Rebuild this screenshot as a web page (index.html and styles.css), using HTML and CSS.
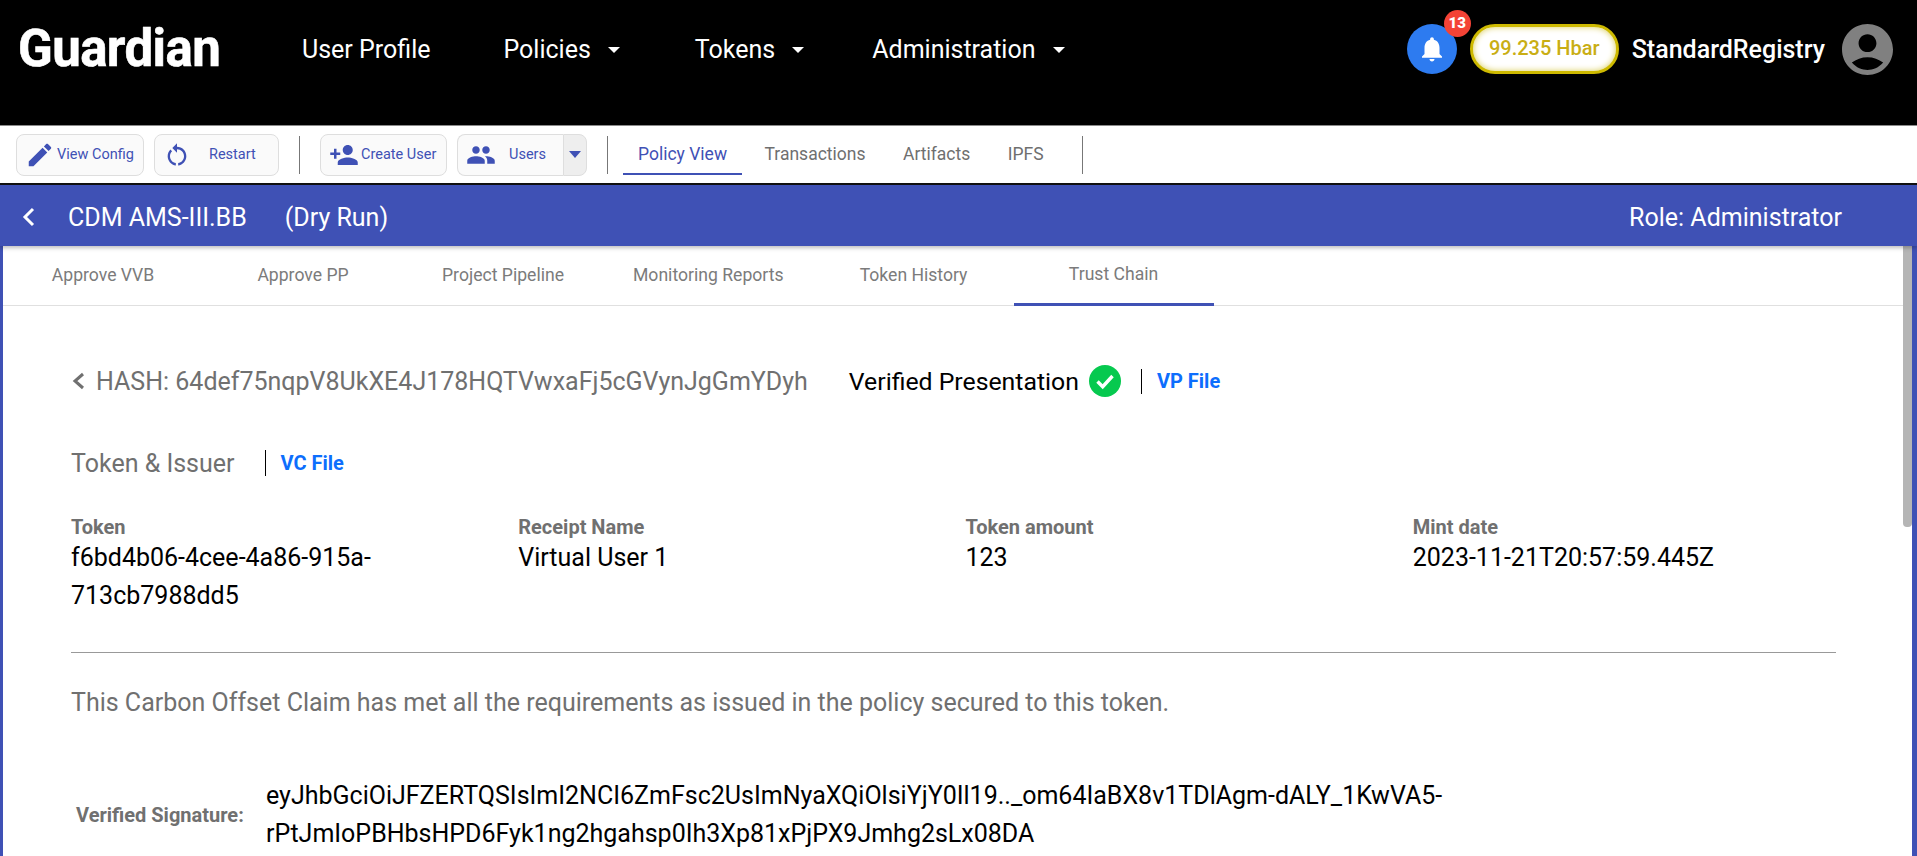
FILE: index.html
```html
<!DOCTYPE html>
<html lang="en">
<head>
    <meta charset="UTF-8">
    <meta name="viewport" content="width=device-width, initial-scale=1.0">
    <title>Guardian</title>
    <link rel="stylesheet" href="styles.css">
</head>
<body>
    <header class="topbar">
        <div class="logo">Guardian</div>
        <nav class="main-nav">
            <a class="nav-link nav-profile">User Profile</a>
            <a class="nav-link nav-policies">Policies<span class="caret"></span></a>
            <a class="nav-link nav-tokens">Tokens<span class="caret"></span></a>
            <a class="nav-link">Administration<span class="caret"></span></a>
        </nav>
        <div class="user-area">
            <div class="bell">
                <svg viewBox="0 0 24 24" width="30" height="30"><path fill="#fff" d="M12 22c1.1 0 2-.9 2-2h-4c0 1.1.89 2 2 2zm6-6v-5c0-3.07-1.64-5.64-4.5-6.32V4c0-.83-.67-1.5-1.5-1.5s-1.5.67-1.5 1.5v.68C7.63 5.36 6 7.92 6 11v5l-2 2v1h16v-1l-2-2z"/></svg>
                <span class="badge">13</span>
            </div>
            <div class="balance">99.235 Hbar</div>
            <div class="username">StandardRegistry</div>
            <svg class="avatar" viewBox="2 2 20 20" width="51" height="51"><path fill="#808080" d="M12 2C6.48 2 2 6.48 2 12s4.48 10 10 10 10-4.48 10-10S17.52 2 12 2zm0 4c1.93 0 3.5 1.57 3.5 3.5S13.93 13 12 13s-3.5-1.57-3.5-3.5S10.07 6 12 6zm0 14c-2.03 0-4.43-.82-6.14-2.88C7.55 15.8 9.68 15 12 15s4.45.8 6.14 2.12C16.43 19.18 14.03 20 12 20z"/></svg>
        </div>
    </header>

    <div class="toolbar">
        <button class="tool-btn btn-config">
            <svg viewBox="0 0 24 24" width="30" height="30"><path d="M3 17.25V21h3.75L17.81 9.94l-3.75-3.75L3 17.25zM20.71 7.04c.39-.39.39-1.02 0-1.41l-2.34-2.34c-.39-.39-1.02-.39-1.41 0l-1.83 1.83 3.75 3.75 1.83-1.83z"/></svg>
            <span>View Config</span>
        </button>
        <button class="tool-btn btn-restart">
            <svg viewBox="0 0 24 24" width="28" height="28"><path d="M12 5V2L8 6l4 4V7c3.31 0 6 2.69 6 6 0 2.97-2.17 5.43-5 5.91v2.02c3.95-.49 7-3.85 7-7.93 0-4.42-3.58-8-8-8zm-6 8c0-1.65.67-3.15 1.76-4.24L6.34 7.34C4.9 8.79 4 10.79 4 13c0 4.08 3.05 7.44 7 7.93v-2.02c-2.83-.48-5-2.94-5-5.91z"/></svg>
            <span>Restart</span>
        </button>
        <div class="tool-divider"></div>
        <button class="tool-btn btn-create">
            <svg viewBox="0 0 24 24" width="30" height="30"><path d="M15 12c2.21 0 4-1.79 4-4s-1.79-4-4-4-4 1.79-4 4 1.79 4 4 4zm-9-2V7H4v3H1v2h3v3h2v-3h3v-2H6zm9 4c-2.67 0-8 1.34-8 4v2h16v-2c0-2.66-5.33-4-8-4z"/></svg>
            <span>Create User</span>
        </button>
        <div class="split-btn">
            <button class="tool-btn btn-users">
                <svg viewBox="0 0 24 24" width="30" height="30"><path d="M16 11c1.66 0 2.99-1.34 2.99-3S17.66 5 16 5c-1.66 0-3 1.34-3 3s1.34 3 3 3zm-8 0c1.66 0 2.99-1.34 2.99-3S9.66 5 8 5C6.34 5 5 6.34 5 8s1.34 3 3 3zm0 2c-2.33 0-7 1.17-7 3.5V19h14v-2.5c0-2.33-4.67-3.5-7-3.5zm8 0c-.29 0-.62.02-.97.05 1.16.84 1.97 1.97 1.97 3.45V19h6v-2.5c0-2.33-4.67-3.5-7-3.5z"/></svg>
                <span>Users</span>
            </button>
            <div class="split-arrow"><span class="caret caret-blue"></span></div>
        </div>
        <div class="tool-divider"></div>
        <div class="view-tabs">
            <a class="view-tab view-tab-active">Policy View</a>
            <a class="view-tab">Transactions</a>
            <a class="view-tab">Artifacts</a>
            <a class="view-tab">IPFS</a>
        </div>
        <div class="tool-divider"></div>
    </div>

    <div class="policy-bar">
        <svg class="policy-back" viewBox="0 0 14 20" width="14" height="20"><path fill="none" stroke="#fff" stroke-width="3" d="M11 2 3 10l8 8"/></svg>
        <span class="policy-name">CDM AMS-III.BB</span>
        <span class="policy-mode">(Dry Run)</span>
        <span class="policy-role">Role: Administrator</span>
    </div>

    <div class="content-frame">
        <div class="scroll-thumb"></div>
        <div class="page-tabs">
            <a class="page-tab">Approve VVB</a>
            <a class="page-tab">Approve PP</a>
            <a class="page-tab">Project Pipeline</a>
            <a class="page-tab">Monitoring Reports</a>
            <a class="page-tab">Token History</a>
            <a class="page-tab page-tab-active">Trust Chain</a>
        </div>

        <main class="chain">
            <div class="hash-row">
                <svg viewBox="0 0 14 20" width="14" height="20"><path fill="none" stroke="#707070" stroke-width="3" d="M12 3 4 10l8 7"/></svg>
                <span class="hash">HASH: 64def75nqpV8UkXE4J178HQTVwxaFj5cGVynJgGmYDyh</span>
                <span class="verified">Verified Presentation</span>
                <svg class="check" viewBox="0 0 32 32" width="32" height="32"><circle cx="16" cy="16" r="16" fill="#06c94f"/><path fill="none" stroke="#fff" stroke-width="3.4" d="m8.5 16.5 5.2 5.2L23.5 11"/></svg>
                <a class="file-link file-link-vp">VP File</a>
            </div>

            <div class="issuer-row">
                <span class="issuer-title">Token &amp; Issuer</span>
                <a class="file-link file-link-vc">VC File</a>
            </div>

            <div class="token-grid">
                <div>
                    <div class="field-label">Token</div>
                    <div class="field-value">f6bd4b06-4cee-4a86-915a-713cb7988dd5</div>
                </div>
                <div>
                    <div class="field-label">Receipt Name</div>
                    <div class="field-value">Virtual User 1</div>
                </div>
                <div>
                    <div class="field-label">Token amount</div>
                    <div class="field-value">123</div>
                </div>
                <div>
                    <div class="field-label">Mint date</div>
                    <div class="field-value">2023-11-21T20:57:59.445Z</div>
                </div>
            </div>

            <hr class="rule">

            <p class="claim">This Carbon Offset Claim has met all the requirements as issued in the policy secured to this token.</p>

            <div class="signature">
                <div class="field-label signature-label">Verified Signature:</div>
                <div class="field-value signature-value">eyJhbGciOiJFZERTQSIsImI2NCI6ZmFsc2UsImNyaXQiOlsiYjY0Il19.._om64IaBX8v1TDlAgm-dALY_1KwVA5-rPtJmIoPBHbsHPD6Fyk1ng2hgahsp0Ih3Xp81xPjPX9Jmhg2sLx08DA</div>
            </div>
        </main>
    </div>
</body>
</html>
```

FILE: styles.css
```css
* {
    box-sizing: border-box;
}
html, body {
    height: 100%;
}
body {
    margin: 0;
    display: flex;
    flex-direction: column;
    overflow: hidden;
    font-family: Roboto, "Liberation Sans", sans-serif;
    background-color: #fff;
}

/* top header */
.topbar {
    flex: none;
    height: 126px;
    display: flex;
    align-items: flex-start;
    padding: 24px 24px 0 18px;
    background-color: #000;
    border-bottom: 1px solid #8a8a8a;
    color: #fff;
}
.logo {
    width: 284px;
    font-size: 51px;
    line-height: 50px;
    font-weight: 700;
    letter-spacing: -0.6px;
    -webkit-text-stroke: 0.6px #fff;
}
.main-nav {
    display: flex;
    padding-top: 1px;
    font-size: 25px;
    line-height: 50px;
}
.nav-link {
    display: flex;
    align-items: center;
    margin-right: 73px;
}
.nav-policies {
    margin-right: 75px;
}
.nav-tokens {
    margin-right: 68px;
}
.caret {
    width: 0;
    height: 0;
    margin-left: 17px;
    border-left: 6px solid transparent;
    border-right: 6px solid transparent;
    border-top: 6px solid #fff;
}
.user-area {
    margin-left: auto;
    display: flex;
    align-items: center;
    height: 50px;
}
.bell {
    position: relative;
    width: 50px;
    height: 50px;
    display: flex;
    align-items: center;
    justify-content: center;
    border-radius: 50%;
    background-color: #2d7bf0;
}
.badge {
    position: absolute;
    top: -14px;
    right: -14px;
    width: 27px;
    height: 27px;
    border-radius: 50%;
    background-color: #f44336;
    font-size: 15px;
    font-weight: 900;
    line-height: 27px;
    text-align: center;
}
.balance {
    width: 149px;
    height: 50px;
    margin-left: 13px;
    border: 3px solid #cdb900;
    border-radius: 25px;
    background-color: #fff;
    box-shadow: inset 0 0 6px #d9cc55;
    color: #c9ae14;
    font-size: 20px;
    font-weight: 500;
    line-height: 43px;
    text-align: center;
}
.username {
    margin-left: 13px;
    font-size: 25px;
    font-weight: 500;
}
.avatar {
    margin-left: 17px;
}

/* toolbar */
.toolbar {
    flex: none;
    height: 59px;
    display: flex;
    align-items: center;
    padding-left: 16px;
    background-color: #fff;
    border-bottom: 2px solid #111;
}
.tool-btn {
    height: 42px;
    display: flex;
    align-items: center;
    padding: 0 0 0 8px;
    border: 1px solid #dedede;
    border-radius: 8px;
    background-color: #fafafa;
    color: #3f51b5;
    font-family: inherit;
    font-size: 14.5px;
    white-space: nowrap;
}
.tool-btn svg {
    flex: none;
    fill: #3f51b5;
}
.btn-config {
    width: 128px;
    margin-right: 10px;
    gap: 2px;
}
.btn-restart {
    width: 125px;
    gap: 18px;
}
.btn-create {
    width: 127px;
    margin-right: 10px;
    gap: 2px;
}
.split-btn {
    width: 130px;
    height: 42px;
    display: flex;
}
.btn-users {
    flex: 1;
    gap: 13px;
    border-radius: 8px 0 0 8px;
    border-right: 0;
}
.split-arrow {
    width: 24px;
    display: flex;
    align-items: center;
    justify-content: center;
    border: 1px solid #dedede;
    border-radius: 0 8px 8px 0;
    background-color: #eee;
}
.caret-blue {
    margin-left: 0;
    border-top: 7px solid #3f51b5;
}
.tool-divider {
    width: 1px;
    height: 38px;
    margin: 0 20px;
    background-color: #777;
}
.view-tabs {
    display: flex;
    align-self: flex-start;
    margin: 0 -4px 0 -5px;
}
.view-tab {
    display: flex;
    align-items: center;
    height: 49px;
    padding: 9px 15px 0;
    margin-right: 7.5px;
    border-bottom: 2px solid transparent;
    color: #6f6f6f;
    font-size: 17.5px;
}
.view-tab-active {
    color: #3f51b5;
    border-bottom-color: #3f51b5;
}

/* policy title */
.policy-bar {
    flex: none;
    height: 61px;
    display: flex;
    align-items: center;
    padding: 3px 75px 0 22px;
    background-color: #3f51b5;
    box-shadow: 0 2px 4px rgba(0, 0, 0, 0.25);
    color: #fff;
    font-size: 25px;
    position: relative;
    z-index: 1;
}
.policy-name {
    margin-left: 32px;
}
.policy-mode {
    margin-left: 38px;
}
.policy-role {
    margin-left: auto;
}

/* content */
.content-frame {
    flex: 1;
    position: relative;
    min-height: 0;
    border-left: 3px solid #3f51b5;
    border-right: 5px solid #3f51b5;
    overflow: hidden;
}
.scroll-thumb {
    position: absolute;
    top: 0;
    right: 0;
    width: 9px;
    height: 281px;
    border-radius: 0 0 4px 4px;
    background-color: #b5b5b5;
}
.page-tabs {
    display: flex;
    height: 60px;
    border-bottom: 1px solid #e0e0e0;
}
.page-tab {
    display: flex;
    align-items: center;
    justify-content: center;
    min-width: 200px;
    padding: 0 30px 2px;
    color: #7b7b7b;
    font-size: 17.6px;
}
.page-tab-active {
    height: 60px;
    border-bottom: 3px solid #3f51b5;
}
.chain {
    padding: 0 76px 0 68px;
}
.hash-row {
    display: flex;
    align-items: center;
    height: 44px;
    margin-top: 53px;
}
.hash {
    margin-left: 11px;
    color: #707070;
    font-size: 25px;
}
.verified {
    margin-left: 41px;
    color: #000;
    font-size: 24.8px;
}
.check {
    margin-left: 10px;
}
.file-link {
    margin-left: 20px;
    padding-left: 15px;
    border-left: 1px solid #000;
    color: #0d6efd;
    font-size: 20px;
    font-weight: 700;
    line-height: 25px;
}
.issuer-row {
    display: flex;
    align-items: center;
    height: 30px;
    margin-top: 45px;
}
.issuer-title {
    color: #707070;
    font-size: 25px;
}
.file-link-vc {
    margin-left: 30px;
    padding-top: 1px;
}
.token-grid {
    display: grid;
    grid-template-columns: repeat(4, 1fr);
    column-gap: 24px;
    margin-top: 37px;
}
.field-label {
    color: #707070;
    font-size: 20px;
    font-weight: 700;
    line-height: 24px;
}
.field-value {
    color: #000;
    font-size: 25px;
    line-height: 38px;
}
.rule {
    height: 1px;
    margin: 37px 0 0;
    border: 0;
    background-color: #999;
}
.claim {
    margin: 35px 0 0;
    color: #707070;
    font-size: 25px;
    line-height: 30px;
}
.signature {
    display: flex;
    align-items: center;
    margin-top: 59px;
}
.signature-label {
    width: 195px;
    padding-left: 5px;
}
.signature-value {
    width: 1300px;
}
```
